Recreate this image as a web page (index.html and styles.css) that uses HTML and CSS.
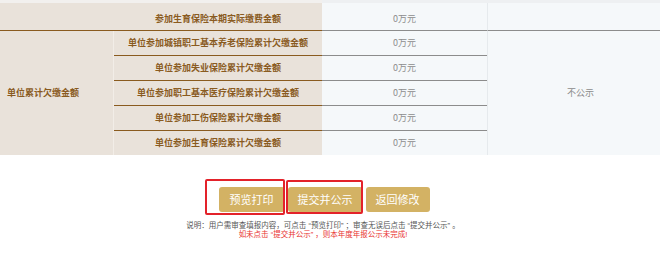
FILE: index.html
```html
<!DOCTYPE html>
<html lang="zh-CN">
<head>
<meta charset="utf-8">
<title>年报公示</title>
<link rel="stylesheet" href="styles.css">
</head>
<body>
<div class="page">
  <div class="top-strip"><span class="strip-a"></span><span class="strip-b"></span></div>
  <table class="report">
    <colgroup>
      <col class="c1"><col class="c2"><col class="c3"><col class="c4">
    </colgroup>
    <tbody>
      <tr class="first">
        <td class="label"></td>
        <td class="label item">参加生育保险本期实际缴费金额</td>
        <td class="value">0万元</td>
        <td class="value pub"></td>
      </tr>
      <tr>
        <td class="label group" rowspan="5">单位累计欠缴金额</td>
        <td class="label item">单位参加城镇职工基本养老保险累计欠缴金额</td>
        <td class="value">0万元</td>
        <td class="value pub" rowspan="5">不公示</td>
      </tr>
      <tr>
        <td class="label item">单位参加失业保险累计欠缴金额</td>
        <td class="value">0万元</td>
      </tr>
      <tr>
        <td class="label item">单位参加职工基本医疗保险累计欠缴金额</td>
        <td class="value">0万元</td>
      </tr>
      <tr>
        <td class="label item">单位参加工伤保险累计欠缴金额</td>
        <td class="value">0万元</td>
      </tr>
      <tr class="last">
        <td class="label item">单位参加生育保险累计欠缴金额</td>
        <td class="value">0万元</td>
      </tr>
    </tbody>
  </table>

  <div class="actions">
    <div class="btn-wrap">
      <button class="btn btn-first">预览打印</button>
      <span class="highlight hl-1"></span>
    </div>
    <div class="btn-wrap">
      <button class="btn">提交并公示</button>
      <span class="highlight hl-2"></span>
    </div>
    <div class="btn-wrap">
      <button class="btn">返回修改</button>
    </div>
  </div>

  <div class="note">
    <p class="note-line">说明：用户需审查填报内容，可点击 “预览打印” ；审查无误后点击 “提交并公示” 。</p>
    <p class="note-line warn">如未点击 “提交并公示” ，则本年度年报公示未完成!</p>
  </div>
</div>
</body>
</html>
```

FILE: styles.css
```css
html, body {
  margin: 0;
  padding: 0;
  background: #ffffff;
  overflow: hidden;
}

body {
  font-family: "Microsoft YaHei", "Noto Sans CJK SC", "Noto Sans", sans-serif;
}

.page {
  width: 673px;
}

.top-strip {
  display: flex;
  height: 3px;
}

.strip-a {
  width: 322px;
  background: #f2f0ee;
}

.strip-b {
  flex: 1;
  background: #eef0f2;
}

.report {
  width: 673px;
  table-layout: fixed;
  border-collapse: separate;
  border-spacing: 0;
}

.c1 { width: 114px; }
.c2 { width: 208px; }
.c3 { width: 165px; }
.c4 { width: 186px; }

.report td {
  height: 24px;
  padding: 0;
  text-align: center;
  vertical-align: middle;
  font-size: 9px;
  line-height: 12px;
  border-bottom: 1px solid;
}

.report tr.first td {
  height: 28px;
  padding-top: 4px;
  box-sizing: border-box;
}

.label {
  background: #e9e2da;
  color: #8a5b1f;
  font-weight: bold;
  border-color: #f3eee9;
}

.report td.label.group {
  text-align: left;
  padding-left: 7px;
  border-right: 1px solid #f2ede7;
}

.value {
  background: #f5f8fa;
  color: #8c8c8c;
  border-color: #e9edf0;
}

.value.pub {
  border-left: 1px solid #e6eaed;
}

.report tr.last td {
  border-bottom: none;
}

.report td.group {
  border-bottom: none;
}

.report td.pub[rowspan] {
  border-bottom: none;
}

.actions {
  display: flex;
  justify-content: center;
  gap: 3px;
  width: 648px;
  margin-top: 32px;
}

.btn-wrap {
  position: relative;
}

.btn {
  display: block;
  height: 25px;
  padding: 0 10px;
  border: none;
  border-radius: 3px;
  background: #d3b264;
  color: #ffffff;
  font-family: "Microsoft YaHei", "Noto Sans CJK SC", sans-serif;
  font-size: 11px;
  line-height: 25px;
  cursor: pointer;
}

.btn-first {
  padding: 0 11px;
}

.highlight {
  position: absolute;
  border: 2px solid #e3222a;
  border-radius: 2px;
  pointer-events: none;
}

.hl-1 {
  left: -14px;
  top: -8px;
  width: 76px;
  height: 32px;
}

.hl-2 {
  left: -2px;
  top: -7px;
  width: 73px;
  height: 30px;
}

.note {
  width: 646px;
  margin-top: 9px;
  text-align: center;
  font-family: "Liberation Sans", "Noto Sans CJK SC", sans-serif;
}

.note-line {
  margin: 0;
  font-size: 7.5px;
  line-height: 9px;
  color: #555555;
}

.note-line.warn {
  color: #e8312f;
}
```
